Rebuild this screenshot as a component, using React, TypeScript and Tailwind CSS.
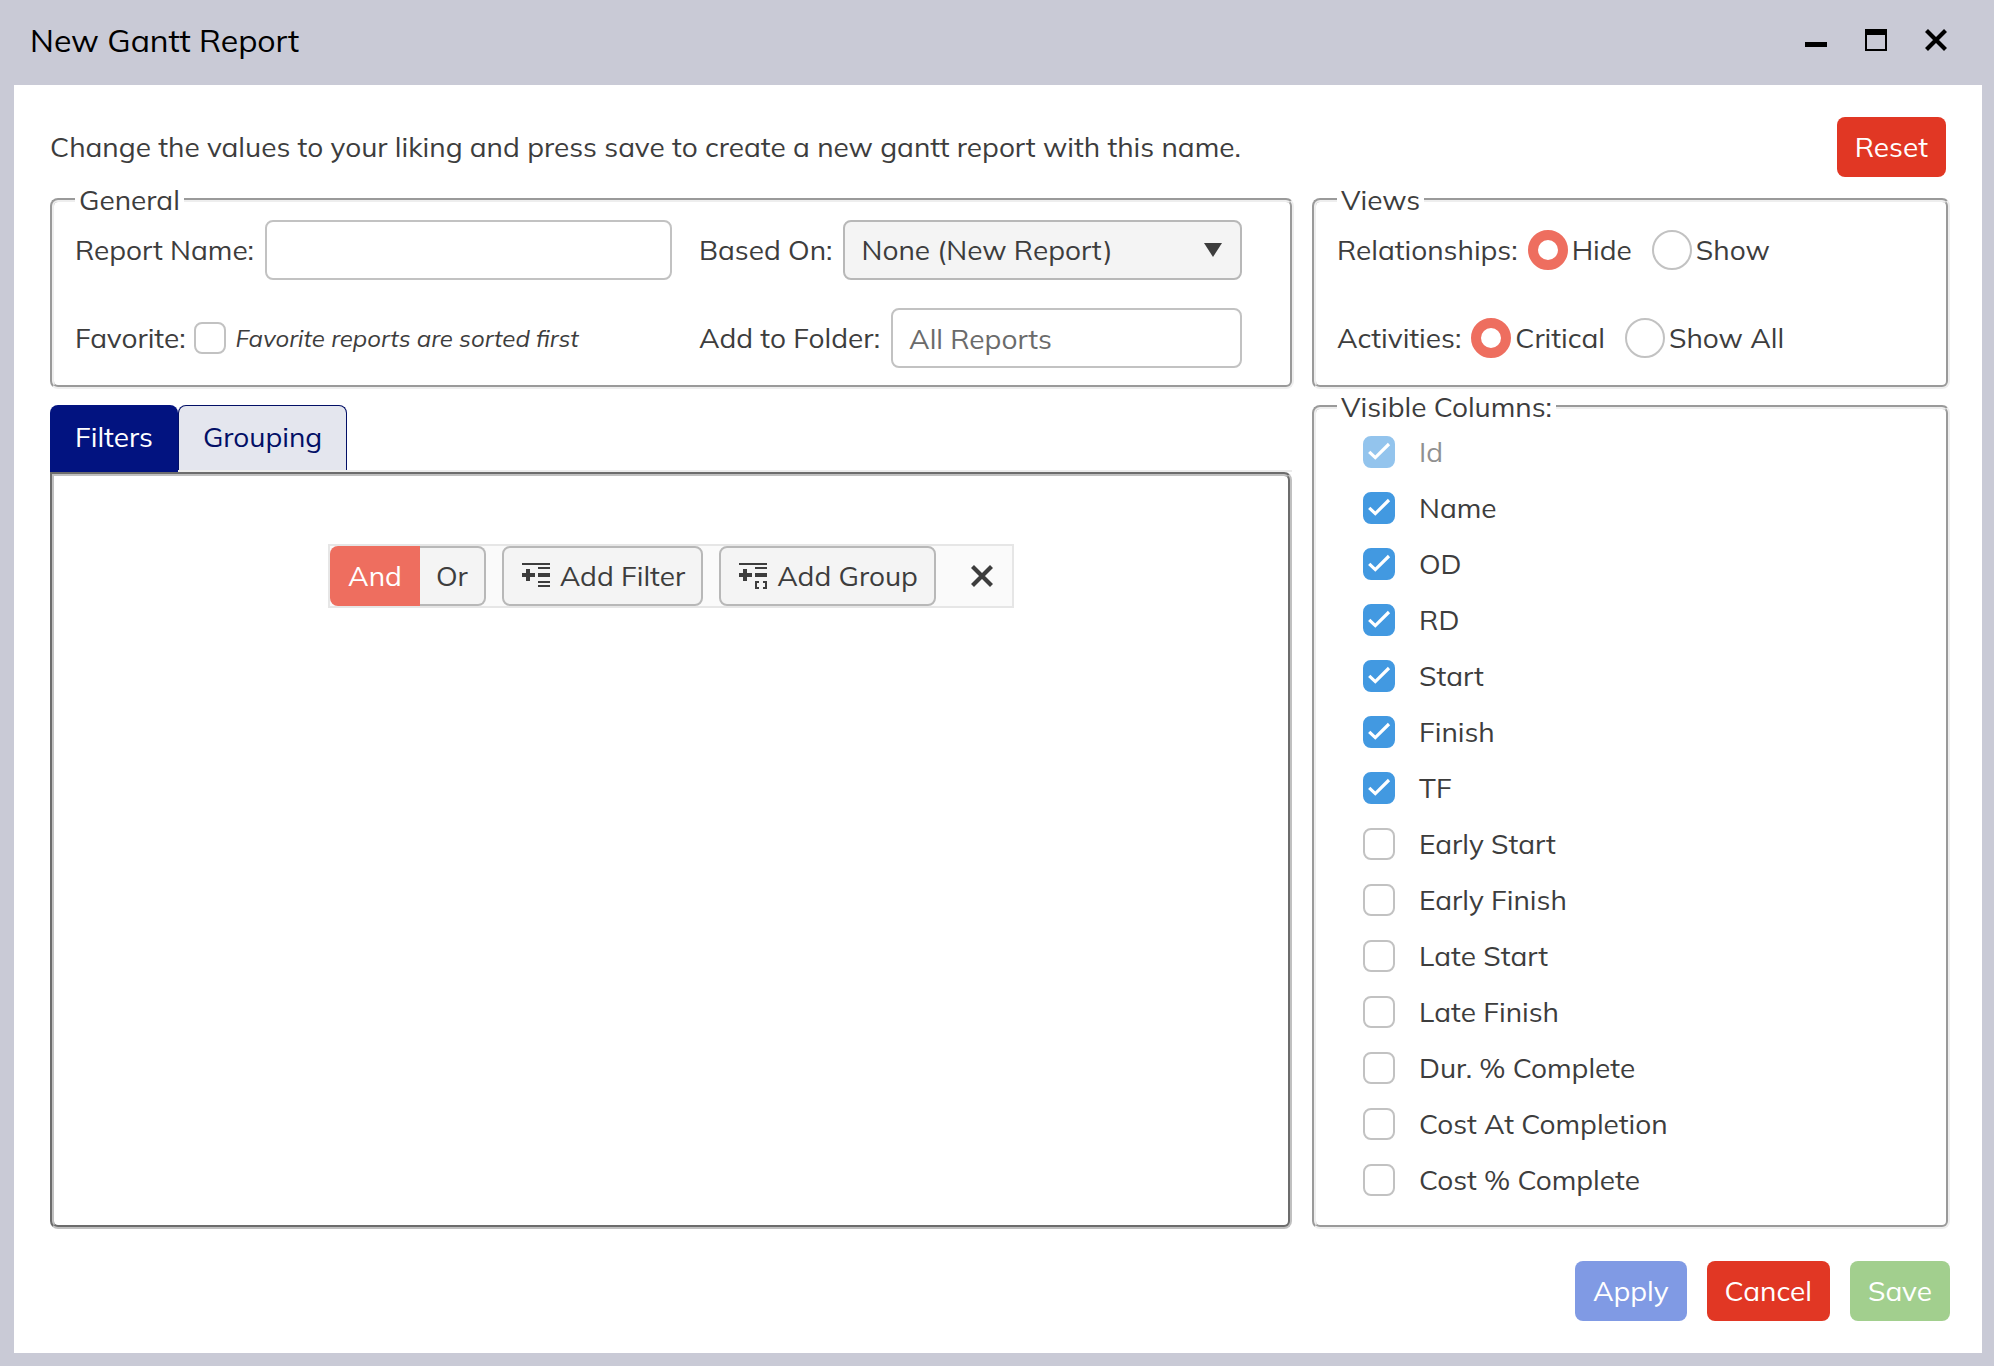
import { useState, type ReactNode } from 'react';

const COLUMNS = [
  'Id',
  'Name',
  'OD',
  'RD',
  'Start',
  'Finish',
  'TF',
  'Early Start',
  'Early Finish',
  'Late Start',
  'Late Finish',
  'Dur. % Complete',
  'Cost At Completion',
  'Cost % Complete',
];

const INITIALLY_VISIBLE = ['Id', 'Name', 'OD', 'RD', 'Start', 'Finish', 'TF'];

function Group({ title, className = '', children }: { title: string; className?: string; children: ReactNode }) {
  return (
    <fieldset className={`min-w-0 rounded-lg border-4 border-[#eeeeee] pl-[21px] [border-style:groove] ${className}`}>
      <legend className="px-1 leading-[35px]">{title}</legend>
      {children}
    </fieldset>
  );
}

function CheckBox({
  id,
  checked,
  disabled,
  onChange,
}: {
  id: string;
  checked: boolean;
  disabled?: boolean;
  onChange: () => void;
}) {
  return (
    <span className="grid size-8 shrink-0">
      <input
        id={id}
        type="checkbox"
        checked={checked}
        disabled={disabled}
        onChange={onChange}
        className="size-8 appearance-none rounded-lg border-2 border-[#c2c2c2] bg-white [grid-area:1/1] checked:border-[#4299e1] checked:bg-[#4299e1]"
      />
      {checked && (
        <svg
          viewBox="0 0 32 32"
          className="pointer-events-none size-8 [grid-area:1/1]"
          fill="none"
          stroke="#fff"
          strokeWidth="3.2"
          aria-hidden="true"
        >
          <path d="M6.2 15.8 12.3 21.6 26 8" />
        </svg>
      )}
    </span>
  );
}

function RadioRow({ label, name, options }: { label: string; name: string; options: string[] }) {
  const [value, setValue] = useState(options[0]);
  return (
    <div role="radiogroup" aria-label={label} className="flex h-[60px] items-center">
      <span className="mr-[10px]">{label}</span>
      <div className="flex gap-5">
        {options.map((option) => (
          <label key={option} className="flex items-center gap-1">
            <input
              type="radio"
              name={name}
              checked={value === option}
              onChange={() => setValue(option)}
              className="size-10 appearance-none rounded-full border-2 border-[#c2c2c2] bg-white checked:border-[10px] checked:border-[#ee6e5f]"
            />
            {option}
          </label>
        ))}
      </div>
    </div>
  );
}

function AddFilterIcon() {
  return (
    <svg viewBox="0 0 28 26" className="h-[26px] w-7" fill="currentColor" shapeRendering="crispEdges" aria-hidden="true">
      <path d="M0 0h28v2H0zM16 4h12v2H16zM16 10h12v4H16zM16 18h12v2H16zM16 22h12v2H16zM4 6h4v4h5v4H8v4H4v-4H0v-4h4z" />
    </svg>
  );
}

function AddGroupIcon() {
  return (
    <svg viewBox="0 0 28 26" className="h-[26px] w-7" fill="currentColor" shapeRendering="crispEdges" aria-hidden="true">
      <path d="M0 0h28v2H0zM16 4h12v2H16zM16 10h12v4H16zM4 6h4v4h5v4H8v4H4v-4H0v-4h4z" />
      <path d="M16 18h4v2h-2v4h2v2h-4zM24 18h4v8h-4v-2h2v-4h-2z" />
    </svg>
  );
}

export default function App() {
  const [visible, setVisible] = useState(INITIALLY_VISIBLE);
  const [favorite, setFavorite] = useState(false);

  const toggle = (column: string) =>
    setVisible((current) => (current.includes(column) ? current.filter((c) => c !== column) : [...current, column]));

  return (
    <div className="flex min-h-screen flex-col bg-[#c9cad6] pr-3 pb-[13px] pl-[14px] font-['Mulish','Nunito','Open_Sans',sans-serif] text-[28px] leading-[34px] text-[#3d3d3d]">
      <header className="flex items-center justify-between pt-5 pr-[34px] pb-[25px] pl-4 text-black">
        <h1 className="text-[32px] leading-[40px]">New Gantt Report</h1>
        <div className="flex gap-9">
          <button type="button" aria-label="Minimize">
            <svg viewBox="0 0 24 24" className="size-6" aria-hidden="true">
              <path d="M1 14h22v5H1z" />
            </svg>
          </button>
          <button type="button" aria-label="Maximize">
            <svg viewBox="0 0 24 24" className="size-6" aria-hidden="true">
              <path fillRule="evenodd" d="M1 1h22v22H1zM3 7v14h18V7z" />
            </svg>
          </button>
          <button type="button" aria-label="Close">
            <svg viewBox="0 0 24 24" className="size-6" fill="none" stroke="currentColor" strokeWidth="4.2" aria-hidden="true">
              <path d="M2.5 2.5 21.5 21.5M21.5 2.5 2.5 21.5" />
            </svg>
          </button>
        </div>
      </header>

      <main className="flex flex-1 flex-col bg-white pt-8 pb-8 pl-9">
        <div className="flex items-center justify-between pr-9">
          <p>Change the values to your liking and press save to create a new gantt report with this name.</p>
          <button type="button" className="h-[60px] rounded-lg bg-[#e13724] px-[18px] text-white">
            Reset
          </button>
        </div>

        <div className="mt-[5px] grid flex-1 grid-cols-[1244fr_638fr] grid-rows-[auto_1fr] gap-x-[18px] pr-8">
          <Group title="General" className="pr-12 pb-[17px]">
            <div className="mt-[3px] grid grid-cols-[597fr_543fr] gap-x-[27px] gap-y-7">
              <div className="flex items-center gap-[11px]">
                <label htmlFor="report-name">Report Name:</label>
                <input
                  id="report-name"
                  type="text"
                  className="h-[60px] min-w-0 flex-1 rounded-lg border-2 border-[#c2c2c2] bg-white px-4"
                />
              </div>
              <div className="flex items-center gap-[11px]">
                <label htmlFor="based-on">Based On:</label>
                <div className="relative flex-1">
                  <select
                    id="based-on"
                    className="h-[60px] w-full appearance-none rounded-lg border-2 border-[#b8b8b8] bg-[#f4f4f4] pr-14 pl-4"
                  >
                    <option>None (New Report)</option>
                  </select>
                  <svg
                    viewBox="0 0 18 14"
                    className="pointer-events-none absolute top-[23px] right-5 h-[14px] w-[18px]"
                    fill="currentColor"
                    aria-hidden="true"
                  >
                    <path d="M0 0h18L9 14z" />
                  </svg>
                </div>
              </div>
              <div className="flex items-center">
                <label htmlFor="favorite" className="mr-2">
                  Favorite:
                </label>
                <CheckBox id="favorite" checked={favorite} onChange={() => setFavorite(!favorite)} />
                <em className="ml-[10px] text-2xl">Favorite reports are sorted first</em>
              </div>
              <div className="flex items-center gap-[11px]">
                <label htmlFor="folder">Add to Folder:</label>
                <input
                  id="folder"
                  type="text"
                  placeholder="All Reports"
                  className="h-[60px] min-w-0 flex-1 rounded-lg border-2 border-[#c2c2c2] bg-white px-4 placeholder:text-[#6b6b6b]"
                />
              </div>
            </div>
          </Group>

          <Group title="Views">
            <div className="mt-[3px] flex flex-col gap-7">
              <RadioRow label="Relationships:" name="relationships" options={['Hide', 'Show']} />
              <RadioRow label="Activities:" name="activities" options={['Critical', 'Show All']} />
            </div>
          </Group>

          <section className="mt-4 mr-[2px] flex min-w-0 flex-col">
            <div role="tablist" className="flex items-start border-b-2 border-[#ececec]">
              <button
                type="button"
                role="tab"
                aria-selected="true"
                className="-mb-[2px] rounded-t-lg bg-[#021380] px-[25px] pt-[15px] pb-[18px] text-white"
              >
                Filters
              </button>
              <button
                type="button"
                role="tab"
                aria-selected="false"
                className="rounded-t-lg border-x border-t border-[#020f66] bg-[#e4e6ee] px-6 pt-[14px] pb-4 text-[#020f66]"
              >
                Grouping
              </button>
            </div>
            <div
              role="tabpanel"
              className="flex flex-1 items-start justify-center rounded-lg rounded-tl-none border-4 border-[#c0c0c0] pt-[68px] [border-style:groove]"
            >
              <div className="flex gap-4 border-2 border-[#e6e6e6] bg-[#fafafa]">
                <div className="flex">
                  <button type="button" aria-pressed="true" className="h-[60px] rounded-l-lg bg-[#ee6e5f] px-[18px] text-white">
                    And
                  </button>
                  <button
                    type="button"
                    aria-pressed="false"
                    className="h-[60px] rounded-r-lg border-y-2 border-r-2 border-[#b8b8b8] bg-[#f4f4f4] px-4"
                  >
                    Or
                  </button>
                </div>
                <button
                  type="button"
                  className="flex h-[60px] items-center gap-[10px] rounded-lg border-2 border-[#b8b8b8] bg-[#f4f4f4] pr-4 pl-[18px]"
                >
                  <AddFilterIcon />
                  Add Filter
                </button>
                <button
                  type="button"
                  className="flex h-[60px] items-center gap-[10px] rounded-lg border-2 border-[#b8b8b8] bg-[#f4f4f4] pr-4 pl-[18px]"
                >
                  <AddGroupIcon />
                  Add Group
                </button>
                <button type="button" aria-label="Remove group" className="grid size-[60px] place-items-center">
                  <svg viewBox="0 0 24 24" className="size-6" fill="none" stroke="currentColor" strokeWidth="4.2" aria-hidden="true">
                    <path d="M2.5 2.5 21.5 21.5M21.5 2.5 2.5 21.5" />
                  </svg>
                </button>
              </div>
            </div>
          </section>

          <Group title="Visible Columns:" className="pb-4">
            <ul className="pl-[26px]">
              {COLUMNS.map((column) => {
                const id = `column-${column.toLowerCase().replace(/[^a-z]+/g, '-')}`;
                const locked = column === 'Id';
                return (
                  <li key={column} className={`flex h-14 items-center gap-6 ${locked ? 'opacity-[.57]' : ''}`}>
                    <CheckBox
                      id={id}
                      checked={visible.includes(column)}
                      disabled={locked}
                      onChange={() => toggle(column)}
                    />
                    <label htmlFor={id}>{column}</label>
                  </li>
                );
              })}
            </ul>
          </Group>
        </div>

        <footer className="mt-8 flex justify-end gap-5 pr-8 text-white">
          <button type="button" className="h-[60px] rounded-lg bg-[#809ae4] px-[18px]">
            Apply
          </button>
          <button type="button" className="h-[60px] rounded-lg bg-[#e13724] px-[18px]">
            Cancel
          </button>
          <button type="button" className="h-[60px] rounded-lg bg-[#a2cf8e] px-[18px]">
            Save
          </button>
        </footer>
      </main>
    </div>
  );
}
